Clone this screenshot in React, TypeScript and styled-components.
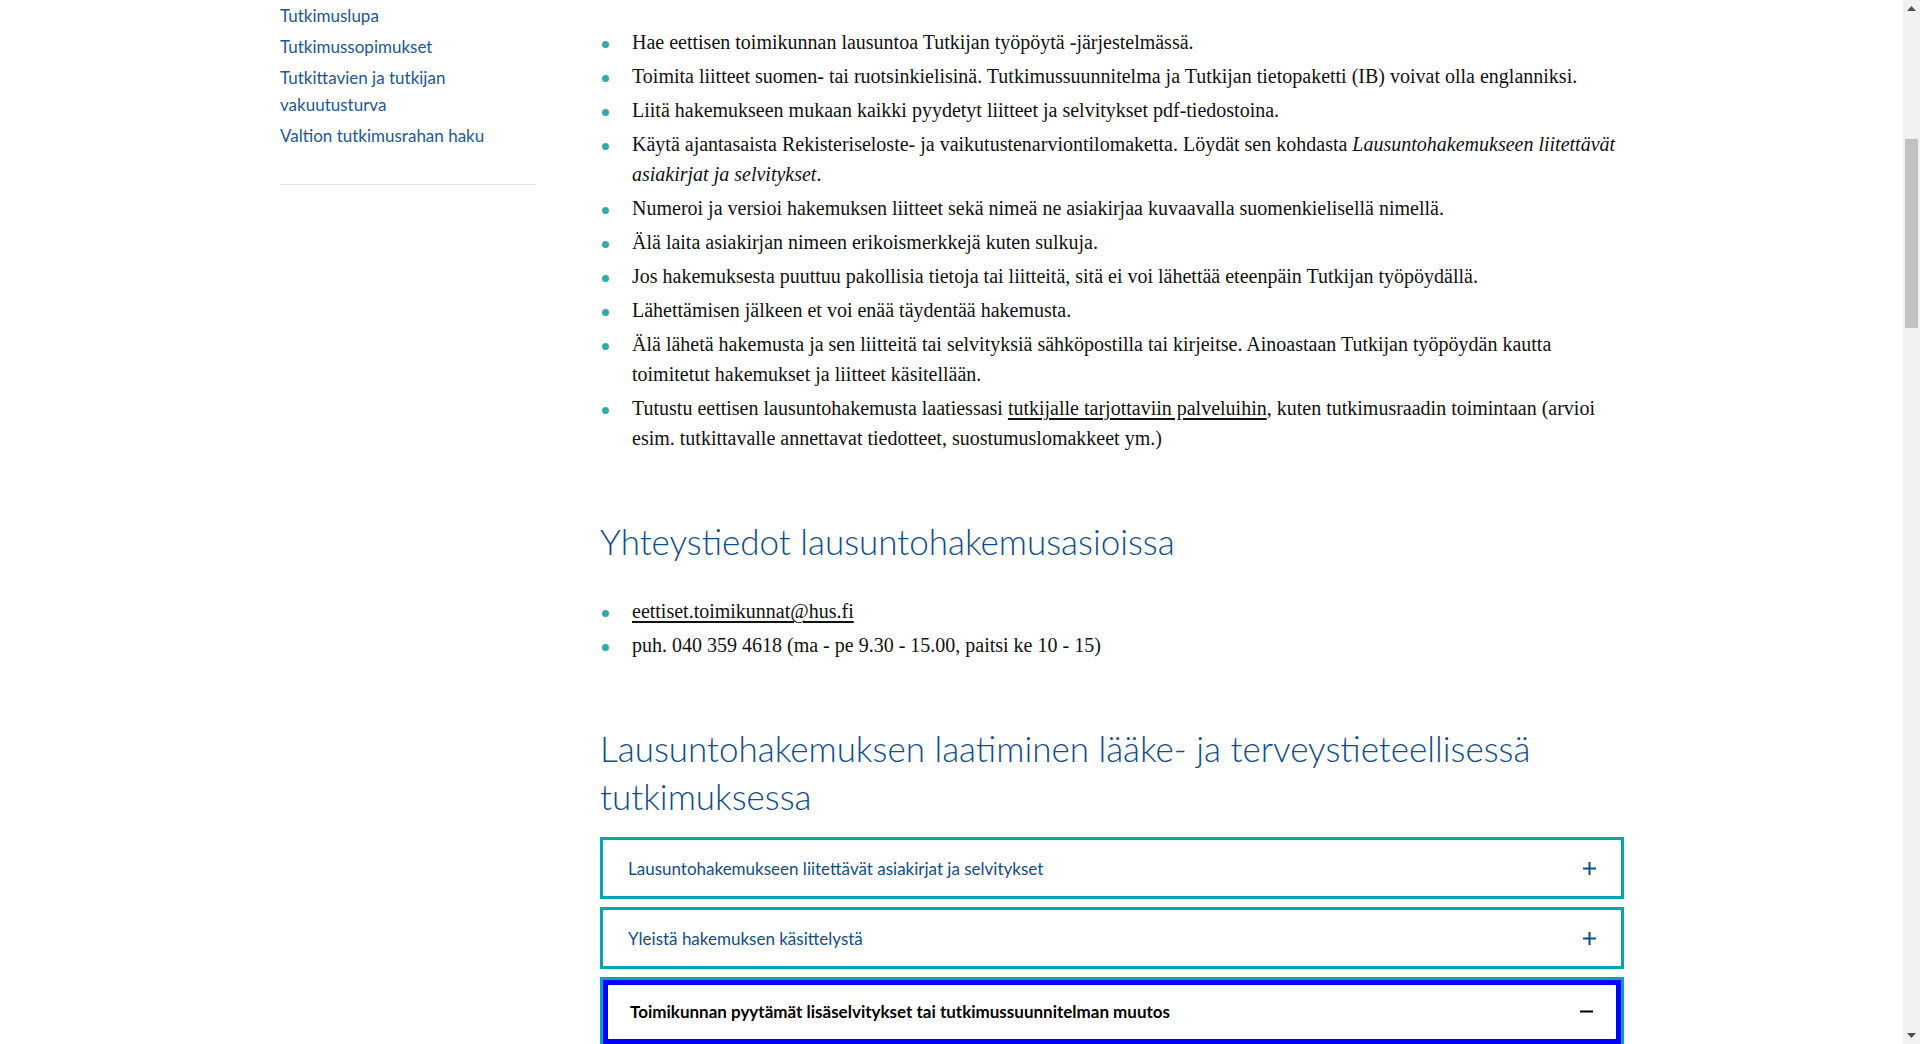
import * as React from "react";
import styled, { createGlobalStyle } from "styled-components";

const GlobalStyle = createGlobalStyle`
  html, body {
    margin: 0;
    padding: 0;
    background: #ffffff;
    overflow: hidden;
  }
`;

const sansStack = `"Lato", "Open Sans", sans-serif`;
const serifStack = `"Liberation Serif", "DejaVu Serif", serif`;
const hdBlue = "#0f4c8c";
const linkBlue = "#1b5797";
const teal = "#00a6b1";

const Page = styled.div`
  display: flex;
  height: 1044px;
  overflow: hidden;
`;

const Viewport = styled.div`
  flex: 1;
  display: grid;
  grid-template-columns: 256px 1024px;
  column-gap: 64px;
  padding-left: 280px;
  align-items: start;
`;

const Sidebar = styled.nav`
  padding-top: 2px;
`;

const SideList = styled.ul`
  list-style: none;
  margin: 0;
  padding: 0 0 31px;
  border-bottom: 1px solid #e6e6e6;
`;

const SideItem = styled.li`
  font-family: ${sansStack};
  font-size: 17px;
  line-height: 27px;
  color: ${linkBlue};
  margin-bottom: 4px;
  padding-right: 40px;
`;

const Main = styled.main`
  padding-top: 27px;
`;

const Bullets = styled.ul`
  list-style: none;
  margin: 0;
  padding: 0;
`;

const Bullet = styled.li`
  position: relative;
  padding-left: 32px;
  margin-bottom: 4px;
  font-family: ${serifStack};
  font-size: 20px;
  line-height: 30px;
  color: #111111;

  &::before {
    content: "";
    position: absolute;
    left: 2px;
    top: 14px;
    width: 7px;
    height: 7px;
    border-radius: 50%;
    background: #2eabb1;
  }
`;

const TextLink = styled.a`
  color: #111111;
  text-decoration: underline;
  text-decoration-thickness: 2px;
  text-underline-offset: 3px;
`;

const Heading = styled.h2<{ $top: number; $bottom: number }>`
  font-family: ${sansStack};
  font-weight: 300;
  font-size: 35px;
  line-height: 48px;
  color: ${hdBlue};
  margin: ${(p) => p.$top}px 0 ${(p) => p.$bottom}px;
`;

const Accordion = styled.div`
  display: flex;
  flex-direction: column;
  gap: 8px;
`;

const Panel = styled.div<{ $focused?: boolean }>`
  flex-shrink: 0;
  border: 3px solid ${teal};
  box-shadow: ${(p) => (p.$focused ? "inset 0 0 0 5px #0000ff" : "none")};
`;

const PanelHeader = styled.div<{ $focused?: boolean }>`
  display: flex;
  align-items: center;
  justify-content: space-between;
  height: ${(p) => (p.$focused ? 64 : 56)}px;
  padding: 0 ${(p) => (p.$focused ? 28 : 25)}px ${(p) => (p.$focused ? 2 : 0)}px ${(p) => (p.$focused ? 27 : 25)}px;
  box-sizing: border-box;
`;

const PanelTitle = styled.span<{ $focused?: boolean }>`
  font-family: ${sansStack};
  font-size: 17px;
  font-weight: ${(p) => (p.$focused ? 700 : 400)};
  color: ${(p) => (p.$focused ? "#000000" : hdBlue)};
`;

const Toggle = styled.svg`
  width: 13px;
  height: 13px;
  flex-shrink: 0;
`;

const Scrollbar = styled.div`
  width: 17px;
  background: #f1f1f1;
  display: flex;
  flex-direction: column;
  align-items: center;
`;

const Arrow = styled.div`
  height: 17px;
  display: flex;
  align-items: center;
  justify-content: center;
`;

const Track = styled.div`
  flex: 1;
  display: flex;
  flex-direction: column;
  align-items: center;
`;

const Thumb = styled.div`
  width: 13px;
  height: 189px;
  margin-top: 122px;
  background: #c1c1c1;
`;

const PlusIcon = () => (
  <Toggle viewBox="0 0 13 13">
    <path d="M6.5 0v13M0 6.5h13" stroke="#0b4f8a" strokeWidth="2" />
  </Toggle>
);

const MinusIcon = () => (
  <Toggle viewBox="0 0 13 13">
    <path d="M0 6.5h13" stroke="#000" strokeWidth="2" />
  </Toggle>
);

const sideLinks = [
  "Tutkimuslupa",
  "Tutkimussopimukset",
  "Tutkittavien ja tutkijan vakuutusturva",
  "Valtion tutkimusrahan haku",
];

const panels = [
  { title: "Lausuntohakemukseen liitettävät asiakirjat ja selvitykset", open: false },
  { title: "Yleistä hakemuksen käsittelystä", open: false },
  { title: "Toimikunnan pyytämät lisäselvitykset tai tutkimussuunnitelman muutos", open: true },
];

export default function App() {
  return (
    <>
      <GlobalStyle />
      <Page>
        <Viewport>
          <Sidebar>
            <SideList>
              {sideLinks.map((l) => (
                <SideItem key={l}>{l}</SideItem>
              ))}
            </SideList>
          </Sidebar>
          <Main>
            <Bullets>
              <Bullet>Hae eettisen toimikunnan lausuntoa Tutkijan työpöytä -järjestelmässä.</Bullet>
              <Bullet>
                Toimita liitteet suomen- tai ruotsinkielisinä. Tutkimussuunnitelma ja Tutkijan tietopaketti (IB) voivat olla englanniksi.
              </Bullet>
              <Bullet>Liitä hakemukseen mukaan kaikki pyydetyt liitteet ja selvitykset pdf-tiedostoina.</Bullet>
              <Bullet>
                Käytä ajantasaista Rekisteriseloste- ja vaikutustenarviontilomaketta. Löydät sen kohdasta{" "}
                <em>Lausuntohakemukseen liitettävät asiakirjat ja selvitykset</em>.
              </Bullet>
              <Bullet>Numeroi ja versioi hakemuksen liitteet sekä nimeä ne asiakirjaa kuvaavalla suomenkielisellä nimellä.</Bullet>
              <Bullet>Älä laita asiakirjan nimeen erikoismerkkejä kuten sulkuja.</Bullet>
              <Bullet>Jos hakemuksesta puuttuu pakollisia tietoja tai liitteitä, sitä ei voi lähettää eteenpäin Tutkijan työpöydällä.</Bullet>
              <Bullet>Lähettämisen jälkeen et voi enää täydentää hakemusta.</Bullet>
              <Bullet>
                Älä lähetä hakemusta ja sen liitteitä tai selvityksiä sähköpostilla tai kirjeitse. Ainoastaan Tutkijan työpöydän kautta toimitetut hakemukset ja liitteet käsitellään.
              </Bullet>
              <Bullet>
                Tutustu eettisen lausuntohakemusta laatiessasi <TextLink href="#">tutkijalle tarjottaviin palveluihin</TextLink>, kuten tutkimusraadin toimintaan (arvioi esim. tutkittavalle annettavat tiedotteet, suostumuslomakkeet ym.)
              </Bullet>
            </Bullets>

            <Heading $top={64} $bottom={31}>Yhteystiedot lausuntohakemusasioissa</Heading>

            <Bullets>
              <Bullet>
                <TextLink href="#">eettiset.toimikunnat@hus.fi</TextLink>
              </Bullet>
              <Bullet>puh. 040 359 4618 (ma - pe 9.30 - 15.00, paitsi ke 10 - 15)</Bullet>
            </Bullets>

            <Heading $top={64} $bottom={17}>
              Lausuntohakemuksen laatiminen lääke- ja terveystieteellisessä tutkimuksessa
            </Heading>

            <Accordion>
              {panels.map((p) => (
                <Panel key={p.title} $focused={p.open}>
                  <PanelHeader $focused={p.open}>
                    <PanelTitle $focused={p.open}>{p.title}</PanelTitle>
                    {p.open ? <MinusIcon /> : <PlusIcon />}
                  </PanelHeader>
                </Panel>
              ))}
            </Accordion>
          </Main>
        </Viewport>

        <Scrollbar>
          <Arrow>
            <svg width="9" height="5" viewBox="0 0 9 5">
              <path d="M0 5L4.5 0L9 5Z" fill="#505050" />
            </svg>
          </Arrow>
          <Track>
            <Thumb />
          </Track>
          <Arrow>
            <svg width="9" height="5" viewBox="0 0 9 5">
              <path d="M0 0L4.5 5L9 0Z" fill="#505050" />
            </svg>
          </Arrow>
        </Scrollbar>
      </Page>
    </>
  );
}
